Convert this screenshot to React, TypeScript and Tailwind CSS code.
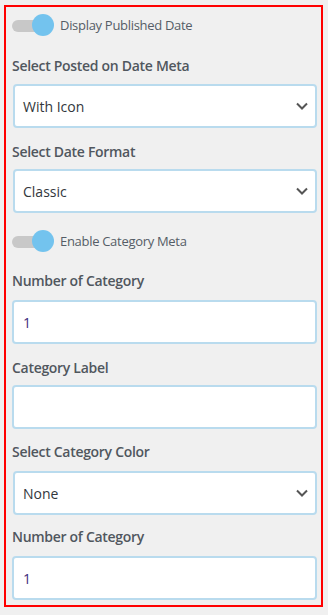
import React from 'react';

const font = { fontFamily: '"Open Sans", "Noto Sans", Arial, sans-serif' };

function Toggle({ label, className }: { label: string; className?: string }) {
  return (
    <div className={`flex items-center h-[22px] ${className ?? ''}`}>
      <div className="relative w-[42px] h-[22px] shrink-0">
        <div className="absolute left-0 top-[6px] w-[36px] h-[12px] rounded-full bg-[#c8c8c8]" />
        <div className="absolute left-[20px] top-0 w-[22px] h-[22px] rounded-full bg-[#73c3ee]" />
      </div>
      <span className="ml-[6px] text-[13px] leading-[20px] text-[#555d66] tracking-[-0.3px]">{label}</span>
    </div>
  );
}

function FieldLabel({ children, className }: { children: React.ReactNode; className?: string }) {
  return (
    <div className={`text-[14px] leading-[20px] font-semibold text-[#50575e] tracking-[-0.3px] ${className ?? ''}`}>
      {children}
    </div>
  );
}

function Select({ value, className }: { value: string; className?: string }) {
  return (
    <div
      className={`flex items-center justify-between h-[44px] ml-[1px] bg-white border-2 border-[#b9dbee] rounded-[4px] pl-[8px] pr-[7px] ${className ?? ''}`}
    >
      <span className="text-[14px] text-[#32373c]">{value}</span>
      <svg width="12" height="8" viewBox="0 0 12 8" fill="none">
        <path d="M1 1.5 L6 6.5 L11 1.5" stroke="#555" strokeWidth="2" />
      </svg>
    </div>
  );
}

function Input({ value, className }: { value?: string; className?: string }) {
  return (
    <div
      className={`flex items-center h-[44px] bg-white border-2 border-[#b9dbee] rounded-[4px] pl-[9px] ${className ?? ''}`}
    >
      <span className="text-[14px] text-[#3d2d7c]">{value}</span>
    </div>
  );
}

export default function App() {
  return (
    <div className="w-[328px] h-[615px] bg-[#f0f0f0] pt-[5px] pl-[4px]" style={font}>
      <div className="w-[319px] h-[602px] border-2 border-[#ff0000] pl-[6px] pr-[4px] pt-[7px]">
        <Toggle label="Display Published Date" />
        <FieldLabel className="mt-[20px]">Select Posted on Date Meta</FieldLabel>
        <Select value="With Icon" className="mt-[8px]" />
        <FieldLabel className="mt-[14px]">Select Date Format</FieldLabel>
        <Select value="Classic" className="mt-[7px]" />
        <Toggle label="Enable Category Meta" className="mt-[17px]" />
        <FieldLabel className="mt-[19px]">Number of Category</FieldLabel>
        <Input value="1" className="mt-[9px]" />
        <FieldLabel className="mt-[14px]">Category Label</FieldLabel>
        <Input className="mt-[7px]" />
        <FieldLabel className="mt-[13px]">Select Category Color</FieldLabel>
        <Select value="None" className="mt-[9px]" />
        <FieldLabel className="mt-[12px]">Number of Category</FieldLabel>
        <Input value="1" className="mt-[9px]" />
      </div>
    </div>
  );
}
